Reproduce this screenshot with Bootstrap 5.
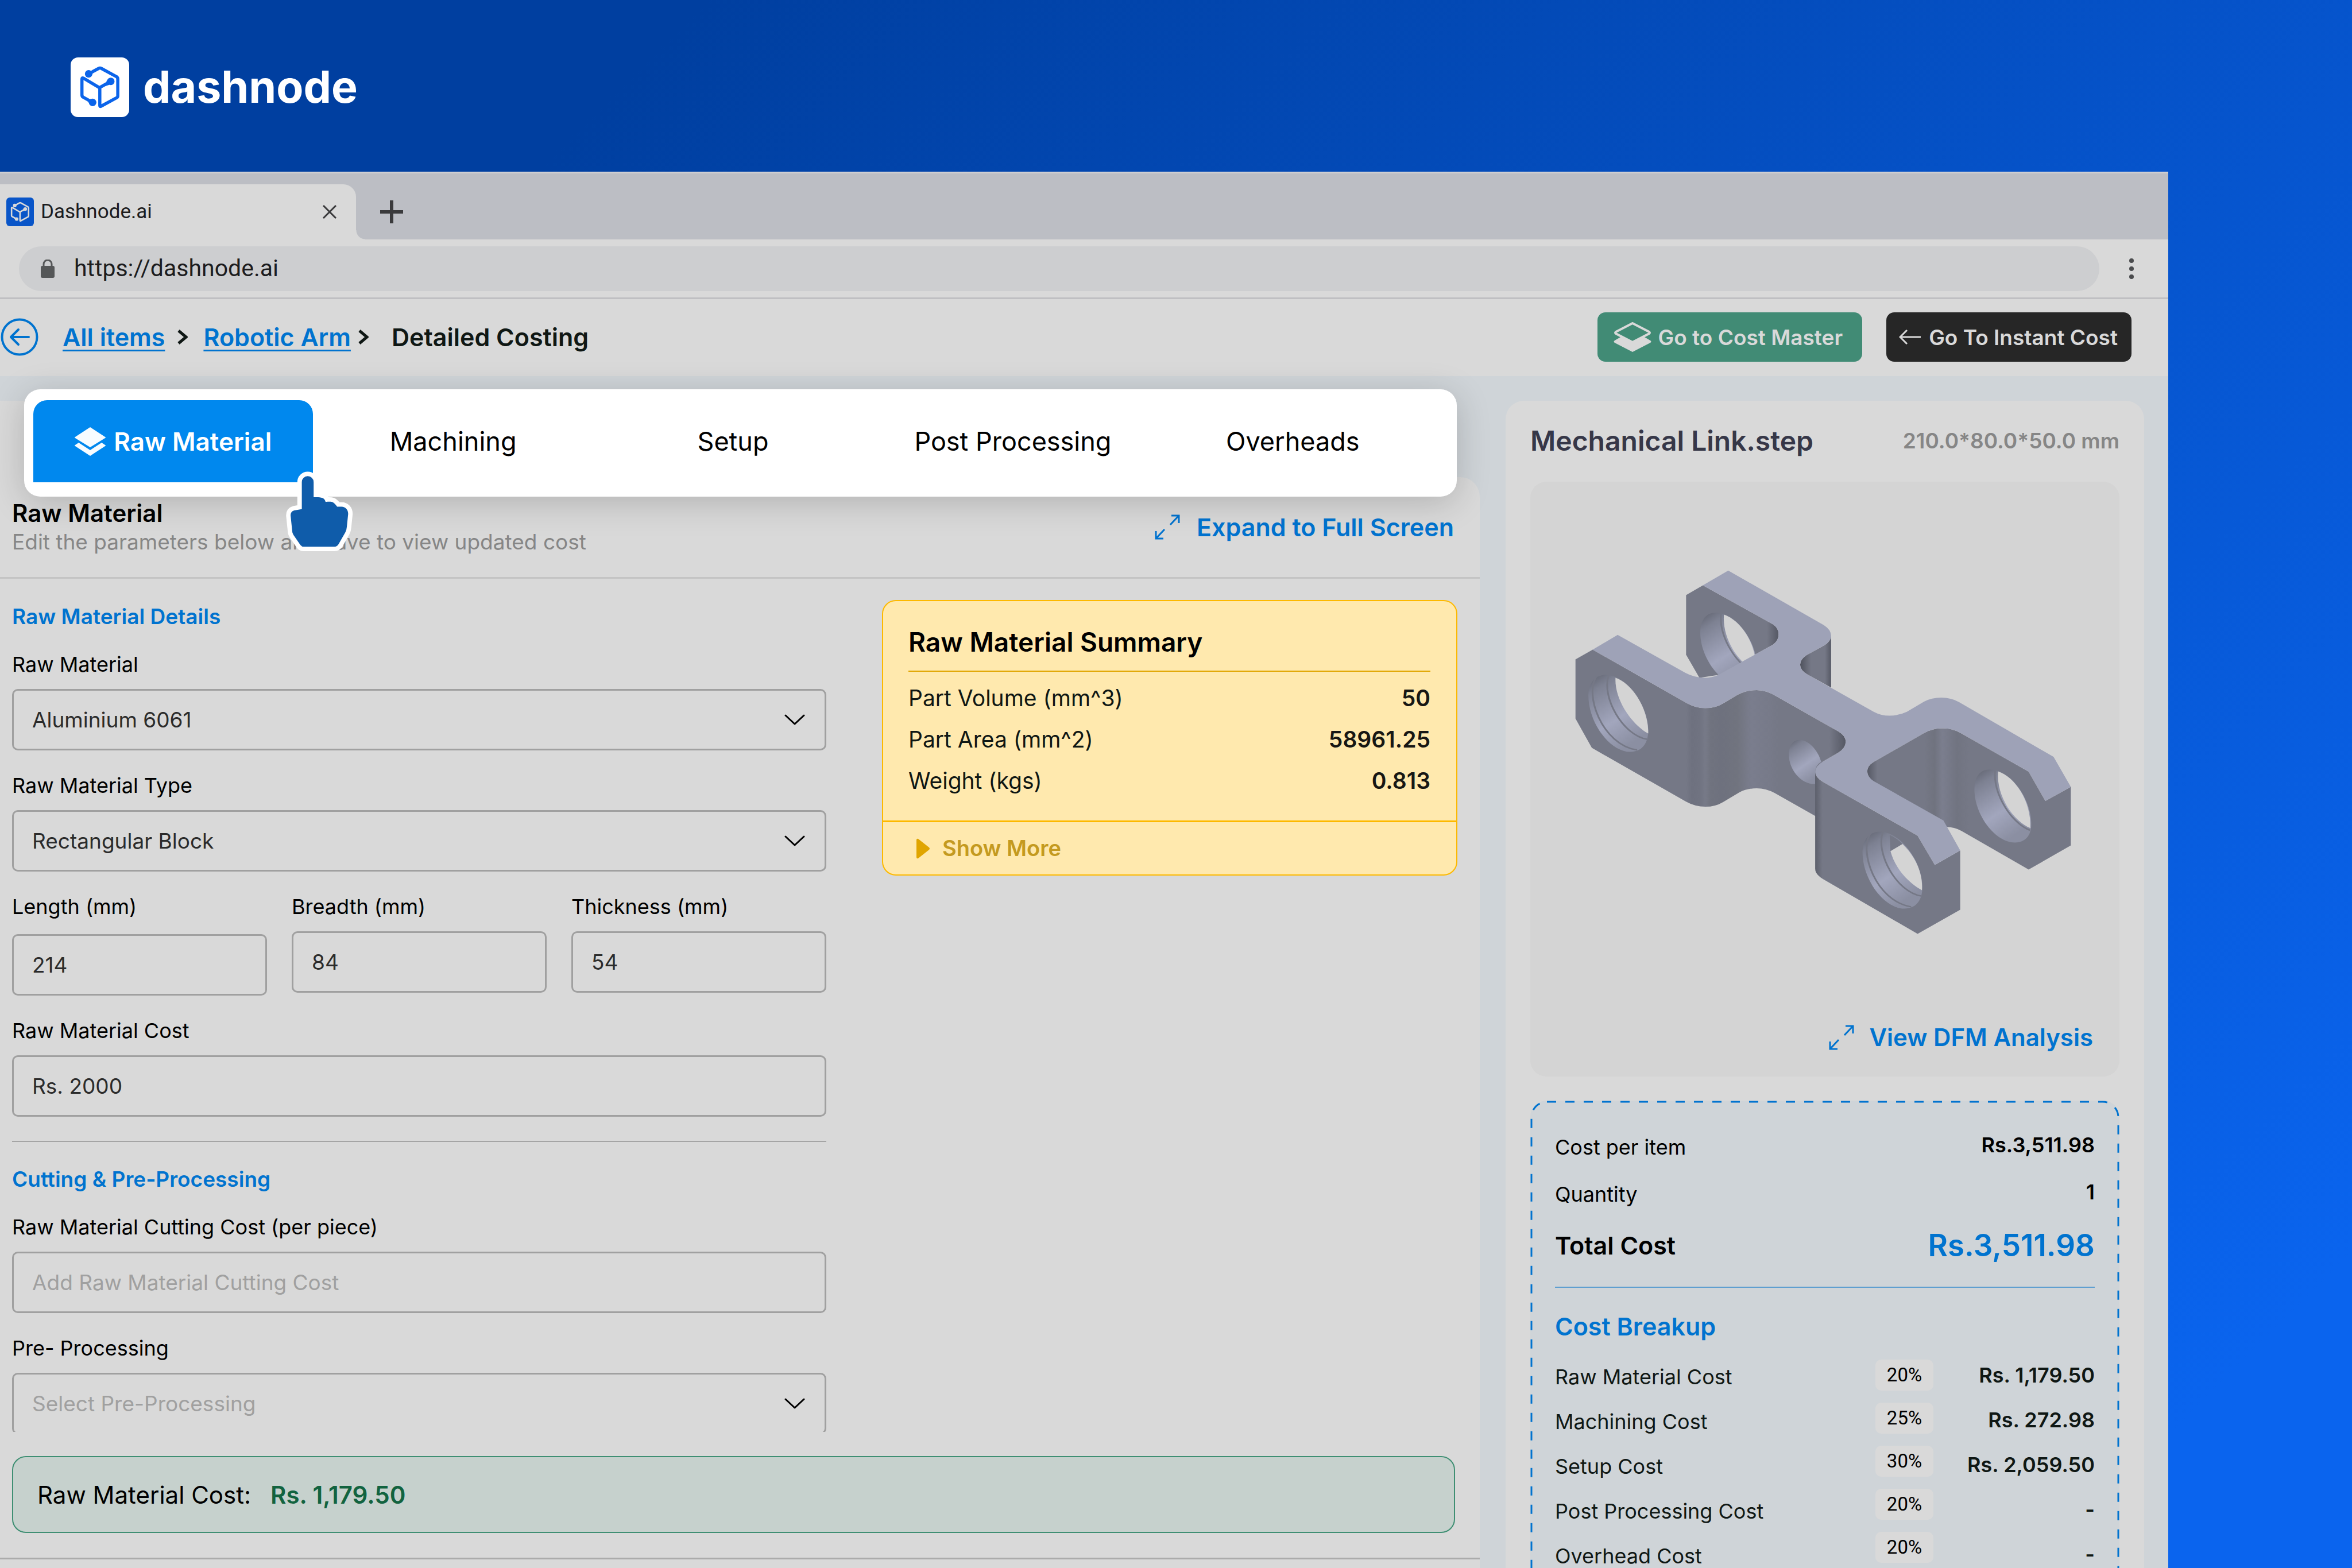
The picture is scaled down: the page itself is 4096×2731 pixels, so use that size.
<!DOCTYPE html>
<html lang="en">
<head>
<meta charset="utf-8">
<meta name="viewport" content="width=device-width, initial-scale=1">
<title>Dashnode.ai</title>
<link href="https://cdn.jsdelivr.net/npm/bootstrap@5.3.0/dist/css/bootstrap.min.css" rel="stylesheet">
<style>
:root{--ink:#0f1714;--blue:#0073cf;--panel:#d9d9d9;--mist:#cfd4d8;--rule:#c4c4c4}
body{font-family:Inter,"Liberation Sans",sans-serif;font-feature-settings:"calt" 0;color:#000;background:linear-gradient(135deg,#003fa0 18%,#0a64ee 92%)}
svg{display:block;flex:none}
.brandbar{height:299px;padding:5px 0 0 123px;gap:24px;color:#fff;font-size:77px;font-weight:700}
.brandmark{color:#0b64ea}
.browser{margin-right:320px;background:var(--panel);min-height:0;border-top:3px solid #cfcfd2}
.tabstrip{background:#bcbec4;height:115px;padding-top:19px;font-family:Roboto,sans-serif}
.tab-page{width:620px;padding:0 34px 0 11px;background:var(--panel);border-radius:0 22px 0 0;font-size:35px;color:#1c1c1e;position:relative;gap:12px}
.tab-page::after{content:"";position:absolute;left:100%;bottom:0;width:16px;height:16px;background:radial-gradient(circle at 100% 0,#bcbec4 15px,var(--panel) 16px)}
.favicon{color:var(--panel)}
.bare{border:0;background:none;padding:0}
.newtab{margin-left:42px}
.addr{height:104px;padding:0 60px 0 33px;gap:52px;border-bottom:3px solid #bfbfc2}
.pill-url{height:78px;border-radius:39px;background:#cdced0;padding:0 38px;gap:34px;font-family:Roboto,sans-serif}
.pill-url input{border:0;background:none;font-size:41px;color:#1c1c1e;padding:0;outline:0;flex:1}
.topbar{height:134px;padding:0 64px 2px 1px;font-size:43px;font-weight:600;color:var(--ink)}
.topbar a{color:var(--blue);text-decoration-thickness:3px;text-underline-offset:6px}
.crumbs{margin-left:42px}
.sep1{margin:0 27px 0 22px}
.sep2{margin:0 40px 0 13px}
.top-btns{gap:42px}
.top-btn{height:86px;border:0;border-radius:14px;color:var(--panel);font-size:37px;font-weight:600;line-height:1}
.btn-master{background:#418b75;padding:0 34px 0 28px;gap:12px}
.btn-instant{background:#262626;padding:0 24px 0 22px;gap:14px}
.work{background:var(--mist);min-height:0;gap:45px;padding-right:42px}
.leftcol{min-height:0;position:relative;min-width:0}
.leftcol::before{content:"";position:absolute;left:0;top:43px;width:560px;height:170px;background:var(--panel)}
.stepper{margin:23px 40px -34px 42px;height:187px;padding:19px 42px 25px 16px;background:#fff;border-radius:28px;box-shadow:0 10px 60px rgba(0,0,0,.18);z-index:2;position:relative}
.stepper button{flex:1 1 0;border:0;background:none;font-size:45px;color:#000;border-radius:24px 24px 0 0;gap:14px;line-height:1}
.stepper button.active{background:#0088ee;color:#fff;font-size:44px;font-weight:600}
.hand{position:absolute;left:443px;top:133px}
.sheet{background:var(--panel);border-top-right-radius:34px;min-height:0;position:relative}
.sheet-head{padding:38px 45px 39px 21px;border-bottom:3px solid var(--rule)}
.sheet-title{font-size:42px;line-height:50px;font-weight:600;margin:0}
.sub{font-size:37px;line-height:44px;color:#868686;margin:3px 0 0}
.zoomlink{color:var(--blue);font-size:43px;line-height:54px;font-weight:600;text-decoration:none;gap:29px}
.sheet-body{padding:37px 39px 0 21px;gap:97px;min-height:0;overflow:hidden;align-items:flex-start}
.formcol{flex:1418 1 0;padding-top:7px;min-width:0}
.sumcol{flex:1002 1 0;min-width:0}
.sec{font-size:37px;line-height:44px;font-weight:600;color:var(--blue);margin:0 0 39px}
.fld{margin-bottom:39px}
.fld label{display:block;font-size:36px;line-height:44px;margin-bottom:21px}
.fld .form-control,.fld .form-select{height:107px;border:3px solid #a0a0a0;border-radius:10px;background-color:transparent;font-size:37px;color:#2b2b2b;padding:0 32px}
.fld .form-select{background-image:url("data:image/svg+xml,%3Csvg xmlns='http://www.w3.org/2000/svg' viewBox='0 0 36 20'%3E%3Cpath d='M2 2l16 15L34 2' fill='none' stroke='%23000' stroke-width='3' stroke-linecap='round' stroke-linejoin='round'/%3E%3C/svg%3E");background-size:36px 20px;background-position:right 34px center}
.fld .form-control::placeholder,.fld .form-select.empty{color:#a0a0a0;opacity:1}
.trio{gap:43px}
.trio .fld{flex:1 1 0;min-width:0}
.fld.low label{margin-bottom:26px}
.cut{border-top:2px solid #a5a5a5;margin:42px 0 43px}
.sumcard{border:2px solid #fdb900;border-radius:24px;background:#ffe9ae;overflow:hidden;color:var(--ink)}
.sumcard-in{padding:44px 45px 45px 44px}
.sumcard h2{font-size:46px;line-height:54px;font-weight:600;margin:0;padding-bottom:23px;border-bottom:2px solid #e0a500;color:#000}
.sumcard dl{margin:22px 0 0;display:grid;gap:24px;font-size:39px;line-height:48px}
.sumcard dt{font-weight:400}
.sumcard dd{margin:0;font-weight:600;color:#171714}
.more{height:94px;border:0;border-top:3px solid #fdb900;background:none;color:#c49a20;font-size:38px;font-weight:600;padding:0 58px;gap:22px}
.costbar{margin:42px 43px 43px 21px;height:134px;border:2px solid #3f8f73;border-radius:24px;background:#c6d1cd;padding:0 42px;font-size:42px;gap:34px}
.costbar strong{color:#12633f;font-weight:600}
.sheet-foot{border-bottom:3px solid #ababab;margin-bottom:15px}
.sidecard{flex:0 0 1112px;margin-top:43px;background:var(--panel);border-radius:32px 32px 0 0;padding:40px 43px 0}
.sidecard h1{font-size:48px;line-height:60px;font-weight:600;color:#363748;margin:0}
.dims{font-size:37px;font-weight:600;color:#868686}
.viewer{margin-top:41px;height:1036px;flex:none;border-radius:28px;background:#d4d4d4;padding:149px 0 41px}
.viewer .zoomlink{font-size:42px;padding-right:46px;gap:27px}
.costbox{margin-top:42px;flex:none;height:1100px;position:relative;border-radius:28px;background:var(--mist);padding:59px 43px 0}
.dash{position:absolute;inset:0;width:100%;height:100%}
.dash rect{width:calc(100% - 4px);height:calc(100% - 4px)}
.costbox .ln{font-size:36px;line-height:44px;margin-bottom:38px}
.costbox .val{font-weight:600;line-height:36px}
.total{margin-top:42px;font-size:43px;line-height:50px;font-weight:600}
.total .big{font-size:53px;color:var(--blue)}
.brk{border-top:2px solid #5f9fd0;margin:47px 0 0;padding-top:42px}
.brk h2{font-size:43px;line-height:50px;font-weight:600;color:var(--blue);margin:0 0 33px}
.brk .col-l,.brk .col-v{gap:34px;font-size:36px;line-height:44px;color:var(--ink)}
.brk .col-l{padding-top:8px}
.brk .col-v{padding-top:5px;width:281px;font-weight:600;text-align:right}
.brk .col-p{gap:21px;width:101px}
.pct{height:54px;border-radius:10px;background:var(--panel);font-family:Roboto,sans-serif;font-size:33px;line-height:54px;text-align:center}
</style>
</head>
<body>
<svg width="0" height="0" class="position-absolute" aria-hidden="true">
 <symbol id="cube" viewBox="33 50 572 588"><g fill="none" stroke="currentColor" stroke-width="31" stroke-linejoin="round"><path d="M208 213L248 190L306 159Q320 150 334 159L483 240Q495 248 495 262V430Q495 440 485 446L328 532Q318 536 318 524V350L157 254Q142 246 142 264V420Q142 434 153 441L247 493M318 346L425 286"/></g><g fill="currentColor"><circle cx="208" cy="212" r="37"/><circle cx="426" cy="286" r="37"/><circle cx="247" cy="493" r="37"/><path d="M232 180L262 181L240 222ZM388 272L412 320L372 332ZM196 478L232 456L212 500Z"/></g></symbol>
 <symbol id="expand" viewBox="0 0 44 44"><path d="M29 2H42V15M42 2L27 18M15 42H2V29M2 42L17 26" fill="none" stroke="currentColor" stroke-width="3"/></symbol>
 <symbol id="chev" viewBox="0 0 18 26"><path d="M2 2L15 13L2 24" fill="none" stroke="currentColor" stroke-width="5"/></symbol>
</svg>
<div class="d-flex flex-column vh-100 overflow-hidden">
 <header class="brandbar d-flex align-items-center flex-shrink-0">
  <svg class="brandmark" width="102" height="104" viewBox="0 0 102 104"><rect width="102" height="104" rx="13" fill="#fff"/><use href="#cube" width="102" height="104"/></svg>
  <span>dashnode</span>
 </header>
 <div class="browser d-flex flex-column flex-grow-1">
  <div class="tabstrip d-flex flex-shrink-0">
   <div class="tab-page d-flex align-items-center">
    <svg class="favicon" width="48" height="50" viewBox="0 0 48 50"><rect width="48" height="50" rx="6" fill="#0955c8"/><use href="#cube" width="48" height="50"/></svg>
    <span class="flex-grow-1">Dashnode.ai</span>
    <button class="bare" aria-label="Close tab"><svg width="24" height="24" viewBox="0 0 24 24"><path d="M1 1L23 23M23 1L1 23" stroke="#3a3a3c" stroke-width="3"/></svg></button>
   </div>
   <button class="bare newtab" aria-label="New tab"><svg width="40" height="40" viewBox="0 0 40 40"><path d="M20 0V40M0 20H40" stroke="#3a3a3c" stroke-width="6"/></svg></button>
  </div>
  <div class="addr d-flex align-items-center flex-shrink-0">
   <div class="pill-url d-flex align-items-center flex-grow-1">
    <svg width="24" height="32" viewBox="0 0 24 32"><rect y="11" width="24" height="21" rx="3" fill="#555758"/><path d="M5 12V8a7 7 0 0 1 14 0V12" fill="none" stroke="#555758" stroke-width="3"/></svg>
    <input type="text" aria-label="Address" value="https://dashnode.ai">
   </div>
   <button class="bare" aria-label="Menu"><svg width="8" height="36" viewBox="0 0 8 36" fill="#4a4b4d"><circle cx="4" cy="4" r="4"/><circle cx="4" cy="18" r="4"/><circle cx="4" cy="32" r="4"/></svg></button>
  </div>
  <nav class="topbar d-flex align-items-center justify-content-between flex-shrink-0">
   <div class="d-flex align-items-center">
    <a href="#" aria-label="Back"><svg width="66" height="66" viewBox="0 0 66 66" fill="none" stroke="#0073cf" stroke-width="4" stroke-linecap="round" stroke-linejoin="round"><circle cx="33" cy="33" r="30.5"/><path d="M49 33H18M31 20L18 33L31 46"/></svg></a>
    <div class="crumbs d-flex align-items-center">
     <a href="#">All items</a>
     <svg class="sep1" width="18" height="26"><use href="#chev"/></svg>
     <a href="#">Robotic Arm</a>
     <svg class="sep2" width="18" height="26"><use href="#chev"/></svg>
     <span>Detailed Costing</span>
    </div>
   </div>
   <div class="top-btns d-flex">
    <button class="top-btn btn-master d-flex align-items-center"><svg width="66" height="52" viewBox="0 0 66 52"><path d="M2 32L33 14L64 32Q67 34 64 36L33 52L2 36Q-1 34 2 32Z" fill="#d9d9d9"/><path d="M4 17L33 2L62 17Q64 18.500 62 20L33 35L4 20Q2 18.500 4 17Z" fill="#418b75" stroke="#d9d9d9" stroke-width="4"/></svg><span>Go to Cost Master</span></button>
    <button class="top-btn btn-instant d-flex align-items-center"><svg width="38" height="26" viewBox="0 0 38 26"><path d="M38 13H2M14 1L2 13L14 25" fill="none" stroke="#d9d9d9" stroke-width="3"/></svg><span>Go To Instant Cost</span></button>
   </div>
  </nav>
  <div class="work d-flex flex-grow-1">
   <main class="leftcol d-flex flex-column flex-grow-1">
    <div class="stepper d-flex flex-shrink-0" role="tablist">
     <button class="active d-flex align-items-center justify-content-center" role="tab"><svg width="54" height="50" viewBox="0 0 54 50" fill="#f7fcff"><path d="M27 0L53 17Q55 18 53 19L27 35L1 19Q-1 18 1 17Z"/><path d="M7 27L27 40L47 27L53 31Q55 32 53 33L27 50L1 33Q-1 32 1 31Z"/></svg><span>Raw Material</span></button>
     <button role="tab">Machining</button>
     <button role="tab">Setup</button>
     <button role="tab">Post Processing</button>
     <button role="tab">Overheads</button>
     <svg class="hand" width="149" height="160" viewBox="0 0 840 900"><path d="M229 160A58 58 0 0 1 345 160V309C400 308 452 305 462 354C520 351 535 345 576 402H620C655 402 684 430 684 472L671 600Q669 630 656 655L590 770Q575 795 550 795H248Q228 795 215 778L147 680Q134 660 134 635L119 490Q117 448 155 439L229 426Z" fill="#fff" stroke="#fff" stroke-width="88" stroke-linejoin="round"/><path d="M229 160A58 58 0 0 1 345 160V309C400 308 452 305 462 354C520 351 535 345 576 402H620C655 402 684 430 684 472L671 600Q669 630 656 655L590 770Q575 795 550 795H248Q228 795 215 778L147 680Q134 660 134 635L119 490Q117 448 155 439L229 426Z" fill="#0f5caa"/></svg>
    </div>
    <section class="sheet d-flex flex-column flex-grow-1">
     <div class="sheet-head d-flex align-items-center justify-content-between">
      <div><h2 class="sheet-title">Raw Material</h2><p class="sub">Edit the parameters below and save to view updated cost</p></div>
      <a href="#" class="zoomlink d-flex align-items-center"><svg width="44" height="44"><use href="#expand"/></svg><span>Expand to Full Screen</span></a>
     </div>
     <div class="sheet-body d-flex flex-grow-1">
      <form class="formcol">
       <h3 class="sec">Raw Material Details</h3>
       <div class="fld"><label for="f1">Raw Material</label><select class="form-select" id="f1"><option>Aluminium 6061</option></select></div>
       <div class="fld"><label for="f2">Raw Material Type</label><select class="form-select" id="f2"><option>Rectangular Block</option></select></div>
       <div class="trio d-flex">
        <div class="fld low"><label for="f3">Length (mm)</label><input class="form-control" id="f3" value="214"></div>
        <div class="fld"><label for="f4">Breadth (mm)</label><input class="form-control" id="f4" value="84"></div>
        <div class="fld"><label for="f5">Thickness (mm)</label><input class="form-control" id="f5" value="54"></div>
       </div>
       <div class="fld mb-0"><label for="f6">Raw Material Cost</label><input class="form-control" id="f6" value="Rs. 2000"></div>
       <div class="cut"></div>
       <h3 class="sec">Cutting &amp; Pre-Processing</h3>
       <div class="fld"><label for="f7">Raw Material Cutting Cost (per piece)</label><input class="form-control" id="f7" placeholder="Add Raw Material Cutting Cost"></div>
       <div class="fld"><label for="f8">Pre- Processing</label><select class="form-select empty" id="f8"><option>Select Pre-Processing</option></select></div>
      </form>
      <aside class="sumcol">
       <div class="sumcard">
        <div class="sumcard-in">
         <h2>Raw Material Summary</h2>
         <dl>
          <div class="d-flex justify-content-between"><dt>Part Volume (mm^3)</dt><dd>50</dd></div>
          <div class="d-flex justify-content-between"><dt>Part Area (mm^2)</dt><dd>58961.25</dd></div>
          <div class="d-flex justify-content-between"><dt>Weight (kgs)</dt><dd>0.813</dd></div>
         </dl>
        </div>
        <button class="more d-flex align-items-center w-100"><svg width="23" height="36" viewBox="0 0 23 36"><path d="M0 3Q0 0 3 1L22 16Q24 18 22 20L3 35Q0 36 0 33Z" fill="#e0a500"/></svg><span>Show More</span></button>
       </div>
      </aside>
     </div>
     <div class="sheet-foot"><div class="costbar d-flex align-items-center"><span>Raw Material Cost:</span><strong>Rs. 1,179.50</strong></div></div>
    </section>
   </main>
   <aside class="sidecard d-flex flex-column">
    <div class="d-flex align-items-center justify-content-between"><h1>Mechanical Link.step</h1><span class="dims">210.0*80.0*50.0 mm</span></div>
    <div class="viewer d-flex flex-column justify-content-between align-items-end">
     <svg class="w-100" height="648" viewBox="70 130 1369 1030" preserveAspectRatio="none" role="img" aria-label="Mechanical link model">
      <defs>
       <linearGradient id="gf" gradientUnits="userSpaceOnUse" x1="175" y1="0" x2="803" y2="0"><stop offset="0" stop-color="#757886"/><stop offset=".41" stop-color="#757886"/><stop offset=".43" stop-color="#6e717f"/><stop offset=".46" stop-color="#707381"/><stop offset=".48" stop-color="#777a88"/><stop offset=".5" stop-color="#70737f"/><stop offset=".54" stop-color="#6e717e"/><stop offset=".6" stop-color="#71747f"/><stop offset=".65" stop-color="#7a7d8d"/><stop offset=".72" stop-color="#777a89"/><stop offset=".75" stop-color="#757886"/><stop offset=".94" stop-color="#757886"/><stop offset="1" stop-color="#555864"/></linearGradient>
       <linearGradient id="gr" gradientUnits="userSpaceOnUse" x1="853" y1="0" x2="1326" y2="0"><stop offset="0" stop-color="#565965"/><stop offset=".05" stop-color="#757886"/><stop offset=".28" stop-color="#757886"/><stop offset=".33" stop-color="#70737f"/><stop offset=".37" stop-color="#7b7e8e"/><stop offset=".44" stop-color="#717481"/><stop offset=".5" stop-color="#757886"/></linearGradient>
       <linearGradient id="gl" gradientUnits="userSpaceOnUse" x1="732" y1="0" x2="1069" y2="0"><stop offset="0" stop-color="#5c5f6b"/><stop offset=".05" stop-color="#757886"/></linearGradient>
       <linearGradient id="gb" gradientUnits="userSpaceOnUse" x1="697" y1="0" x2="769" y2="0"><stop offset="0" stop-color="#4f525d"/><stop offset=".35" stop-color="#757886"/><stop offset=".8" stop-color="#757886"/><stop offset="1" stop-color="#565965"/></linearGradient>
       <linearGradient id="gk" gradientUnits="userSpaceOnUse" x1="620" y1="0" x2="647" y2="0"><stop offset="0" stop-color="#757886"/><stop offset="1" stop-color="#555864"/></linearGradient>
       <linearGradient id="bore" x1="0" y1="0" x2=".5" y2="1"><stop offset="0" stop-color="#5f626e"/><stop offset=".2" stop-color="#7d8192"/><stop offset=".65" stop-color="#a2a6bd"/><stop offset="1" stop-color="#8b8fa2"/></linearGradient>
       <g id="holeA"><path d="M243 428C290 425 345 510 344 585C343 620 328 641 302 641C255 641 204 560 205 482C206 450 220 430 243 428Z" fill="url(#bore)"/><path d="M224 432C195 480 235 620 318 636M252 429C235 490 285 595 341 606" fill="none" stroke="#757886" stroke-width="4"/></g>
       <g id="holeB"><path d="M1138 690C1185 690 1234 770 1234 842C1234 875 1218 892 1196 892C1150 892 1102 815 1102 745C1102 710 1115 690 1138 690Z" fill="url(#bore)"/><path d="M1150 692C1145 760 1190 840 1231 858" fill="none" stroke="#757886" stroke-width="4"/><path d="M1157 695C1195 710 1234 775 1232 852C1195 835 1152 765 1157 695Z" fill="#d4d4d4"/></g>
      </defs>
      <path d="M432 207L471 180L634 288Q647 298 647 316Q647 333 634 344L507 428L463 436L432 372Z" fill="url(#gk)"/>
      <use href="#holeB" x="-637" y="-434"/>
      <path d="M769 320V463L714 427Q697 415 697 400Q697 385 712 373L752 347Q769 335 769 320Z" fill="url(#gb)"/>
      <path d="M175 385L215 358L435 507Q455 520 477 520Q500 520 518 507L552 483Q572 470 596 470Q620 471 640 486L785 584Q803 597 803 613Q803 631 785 644L750 668L734 697V820L638 755Q617 742 596 742Q574 742 556 753L518 780Q500 793 477 793Q453 793 432 779L213 630L175 549Z" fill="url(#gf)"/>
      <path d="M671 650C671 620 682 608 696 608C718 608 740 640 746 669Q732 678 732 697V730C700 732 671 690 671 650Z" fill="url(#bore)"/>
      <use href="#holeA"/><path d="M268 436C305 450 345 520 344 590C310 570 265 500 268 436Z" fill="#d4d4d4"/>
      <path d="M853 695Q853 680 868 669L985 589Q1005 576 1028 576Q1052 576 1072 590L1228 696L1267 777L1326 738V900L1228 967L1072 860Q1055 849 1036 849L1020 840L868 730Q853 710 853 695Z" fill="url(#gr)"/>
      <use href="#holeB"/>
      <path d="M732 697Q732 711 750 724L970 873L1010 954L1069 914V1078L970 1145L750 993Q732 980 732 965Z" fill="url(#gl)"/>
      <use href="#holeA" x="637" y="434"/><path d="M905 871Q920 878 935 896L907 916Z" fill="#757886"/><path d="M935 896C960 925 983 970 980 1024C950 1005 918 965 907 916Z" fill="#d4d4d4"/>
      <path d="M471 180L530 139L752 290Q769 303 769 320Q769 335 752 347L712 373Q697 385 697 400Q697 415 714 427L868 530Q885 541 905 541Q925 541 945 530L985 502Q1003 491 1025 491Q1047 491 1066 503L1286 655L1326 738L1267 777L1228 696L1072 590Q1052 576 1028 576Q1005 576 985 589L868 669Q853 680 853 695Q853 710 868 722L1030 831L1069 914L1010 954L970 873L750 724Q732 711 732 697Q732 680 750 668L785 644Q803 631 803 613Q803 597 785 584L640 486Q620 471 596 470Q572 470 552 483L518 507Q500 520 477 520Q455 520 435 507L215 358L273 317L430 422Q450 435 475 436Q492 436 507 428L634 344Q647 333 647 316Q647 298 634 288Z" fill="#9ea2b7"/>
     </svg>
     <a href="#" class="zoomlink d-flex align-items-center"><svg width="44" height="44"><use href="#expand"/></svg><span>View DFM Analysis</span></a>
    </div>
    <div class="costbox">
     <svg class="dash" aria-hidden="true"><rect x="2" y="2" rx="27" fill="none" stroke="#0073cf" stroke-width="3" stroke-dasharray="16 16"/></svg>
     <div class="ln d-flex justify-content-between align-items-start"><span>Cost per item</span><span class="val">Rs.3,511.98</span></div>
     <div class="ln d-flex justify-content-between align-items-start"><span>Quantity</span><span class="val">1</span></div>
     <div class="total d-flex justify-content-between align-items-center"><span>Total Cost</span><span class="big">Rs.3,511.98</span></div>
     <div class="brk">
      <h2>Cost Breakup</h2>
      <div class="d-flex align-items-start">
       <div class="col-l d-flex flex-column flex-grow-1"><span>Raw Material Cost</span><span>Machining Cost</span><span>Setup Cost</span><span>Post Processing Cost</span><span>Overhead Cost</span></div>
       <div class="col-p d-flex flex-column"><span class="pct">20%</span><span class="pct">25%</span><span class="pct">30%</span><span class="pct">20%</span><span class="pct">20%</span></div>
       <div class="col-v d-flex flex-column"><span>Rs. 1,179.50</span><span>Rs. 272.98</span><span>Rs. 2,059.50</span><span>-</span><span>-</span></div>
      </div>
     </div>
    </div>
   </aside>
  </div>
 </div>
</div>
<script src="https://cdn.jsdelivr.net/npm/bootstrap@5.3.0/dist/js/bootstrap.bundle.min.js"></script>
</body>
</html>
